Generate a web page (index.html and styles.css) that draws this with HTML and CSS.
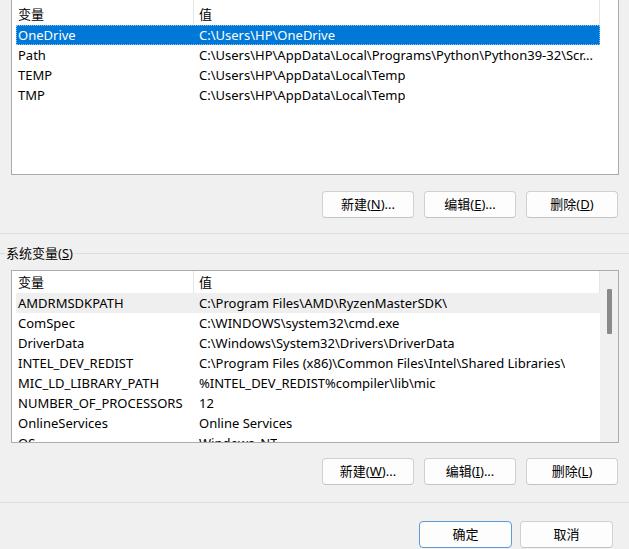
FILE: index.html
```html
<!DOCTYPE html>
<html lang="zh-CN">
<head>
<meta charset="utf-8">
<title>环境变量</title>
<link rel="stylesheet" href="styles.css">
</head>
<body>
<div class="dialog">
  <div class="list list-user">
    <div class="lv-main">
      <div class="lv-header">
        <div class="hc c1">变量</div>
        <div class="hc c2">值</div>
      </div>
      <div class="lv-rows">
        <div class="row selected"><span class="c1">OneDrive</span><span class="c2">C:\Users\HP\OneDrive</span></div>
        <div class="row"><span class="c1">Path</span><span class="c2">C:\Users\HP\AppData\Local\Programs\Python\Python39-32\Scr...</span></div>
        <div class="row"><span class="c1">TEMP</span><span class="c2">C:\Users\HP\AppData\Local\Temp</span></div>
        <div class="row"><span class="c1">TMP</span><span class="c2">C:\Users\HP\AppData\Local\Temp</span></div>
      </div>
    </div>
  </div>

  <div class="btnrow">
    <button class="btn">新建(<u>N</u>)...</button>
    <button class="btn">编辑(<u>E</u>)...</button>
    <button class="btn">删除(<u>D</u>)</button>
  </div>

  <div class="sep first-sep"></div>

  <div class="group-label">
    <span class="gl-line short"></span>
    <span class="gl-text">系统变量(<u>S</u>)</span>
    <span class="gl-line"></span>
  </div>

  <div class="list list-sys">
    <div class="lv-main">
      <div class="lv-header">
        <div class="hc c1">变量</div>
        <div class="hc c2">值</div>
      </div>
      <div class="lv-rows">
        <div class="row hover"><span class="c1">AMDRMSDKPATH</span><span class="c2">C:\Program Files\AMD\RyzenMasterSDK\</span></div>
        <div class="row"><span class="c1">ComSpec</span><span class="c2">C:\WINDOWS\system32\cmd.exe</span></div>
        <div class="row"><span class="c1">DriverData</span><span class="c2">C:\Windows\System32\Drivers\DriverData</span></div>
        <div class="row"><span class="c1">INTEL_DEV_REDIST</span><span class="c2">C:\Program Files (x86)\Common Files\Intel\Shared Libraries\</span></div>
        <div class="row"><span class="c1">MIC_LD_LIBRARY_PATH</span><span class="c2">%INTEL_DEV_REDIST%compiler\lib\mic</span></div>
        <div class="row"><span class="c1">NUMBER_OF_PROCESSORS</span><span class="c2">12</span></div>
        <div class="row"><span class="c1">OnlineServices</span><span class="c2">Online Services</span></div>
        <div class="row"><span class="c1">OS</span><span class="c2">Windows_NT</span></div>
      </div>
    </div>
    <div class="vscroll"><div class="thumb"></div></div>
  </div>

  <div class="btnrow second">
    <button class="btn">新建(<u>W</u>)...</button>
    <button class="btn">编辑(<u>I</u>)...</button>
    <button class="btn">删除(<u>L</u>)</button>
  </div>

  <div class="sep second-sep"></div>

  <div class="btnrow final">
    <button class="btn btn-default">确定</button>
    <button class="btn">取消</button>
  </div>
</div>
</body>
</html>
```

FILE: styles.css
```css
html, body {
  margin: 0;
  padding: 0;
}

body {
  background: #f0f0f0;
  font-family: "Noto Sans", "Noto Sans CJK SC", sans-serif;
  font-size: 13px;
  color: #000;
  width: 629px;
  height: 549px;
  overflow: hidden;
}

.dialog {
  display: flex;
  flex-direction: column;
}

/* list views */
.list {
  margin-left: 11px;
  width: 608px;
  box-sizing: border-box;
  border: 1px solid #acacac;
  background: #fff;
  display: flex;
  overflow: hidden;
  flex: none;
}

.list-user {
  border-top: none;
  height: 175px;
}

.list-sys {
  margin-top: 7px;
  height: 173px;
}

.lv-main {
  width: 588px;
  flex: none;
}

.lv-header {
  display: flex;
  background: #fff;
}

.list-user .lv-header {
  height: 25px;
}

.list-sys .lv-header {
  height: 22px;
}

.hc {
  box-sizing: border-box;
  line-height: 20px;
  border-right: 1px solid #e5e5e5;
  white-space: nowrap;
}

.list-user .hc {
  padding-top: 4px;
}

.list-sys .hc {
  padding-top: 1px;
}

.hc.c1 {
  width: 182px;
  padding-left: 6px;
}

.hc.c2 {
  flex: 1;
  padding-left: 5px;
}

.lv-rows {
  margin-left: 4px;
  width: 584px;
}

.row {
  display: flex;
  height: 20px;
  line-height: 20px;
  white-space: nowrap;
  box-sizing: border-box;
}

.row .c1 {
  width: 177px;
  padding-left: 2px;
  box-sizing: border-box;
  flex: none;
  overflow: hidden;
}

.row .c2 {
  padding-left: 6px;
  overflow: hidden;
}

.row.selected {
  background: #0078d7;
  color: #fff;
  outline: 1px dotted #8cc0ee;
  outline-offset: -1px;
}

.row.hover {
  background: #efefef;
}

/* scrollbar */
.vscroll {
  width: 18px;
  flex: none;
  background: #f0f0f0;
  padding-top: 18px;
  box-sizing: border-box;
}

.thumb {
  margin-left: 7px;
  width: 5px;
  height: 45px;
  background: #8a8a8a;
  border-radius: 1px;
}

/* buttons */
.btnrow {
  display: flex;
  justify-content: flex-end;
  gap: 10px;
  padding-right: 11px;
  margin-top: 16px;
  flex: none;
}

.btnrow.second {
  margin-top: 15px;
}

.btnrow.final {
  gap: 8px;
  padding-right: 16px;
  margin-top: 18px;
}

.btn {
  width: 92px;
  height: 27px;
  box-sizing: border-box;
  background: #fdfdfd;
  border: 1px solid #d0d0d0;
  border-bottom-color: #c4c4c4;
  border-radius: 4px;
  font-family: "Noto Sans", "Noto Sans CJK SC", sans-serif;
  font-size: 13px;
  color: #000;
  padding: 0 0 1px;
  line-height: 24px;
}

.btnrow.final .btn {
  width: 93px;
}

.btn-default {
  border-color: #5b9bd9;
}

/* separators & group */
.sep {
  height: 1px;
  background: #dedede;
  flex: none;
}

.first-sep {
  margin-top: 15px;
}

.second-sep {
  margin-top: 17px;
}

.group-label {
  margin-top: 9px;
  height: 20px;
  display: flex;
  align-items: center;
  flex: none;
}

.gl-line {
  flex: 1;
  height: 1px;
  background: #dcdcdc;
}

.gl-line.short {
  flex: none;
  width: 5px;
}

.gl-text {
  line-height: 20px;
  padding: 0 1px 1px;
  white-space: nowrap;
}
```
